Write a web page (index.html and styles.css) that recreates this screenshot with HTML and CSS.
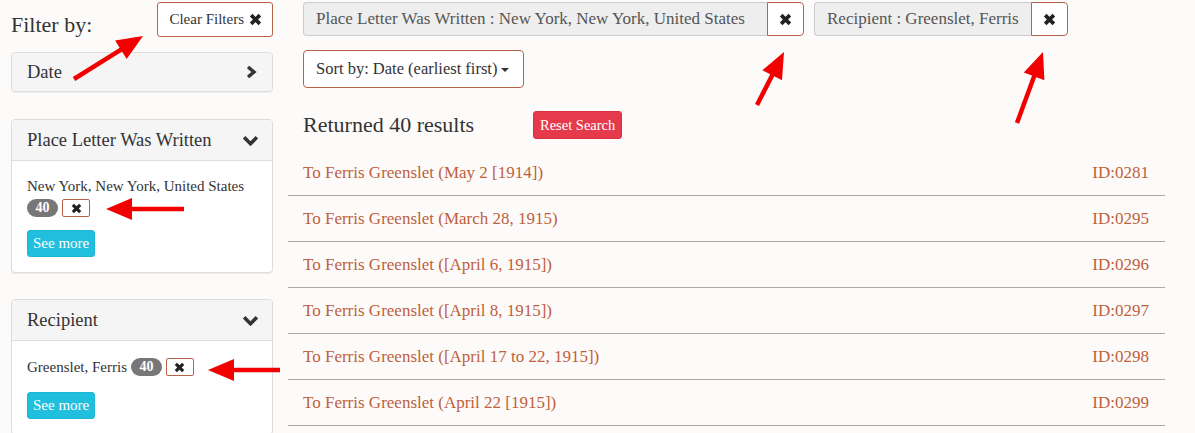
FILE: index.html
```html
<!DOCTYPE html>
<html>
<head>
<meta charset="utf-8">
<link rel="stylesheet" href="styles.css">
</head>
<body>
<div class="page">
  <aside class="sidebar">
    <div class="sidebar-top">
      <h2 class="filter-title">Filter by:</h2>
      <button class="btn-clear">Clear Filters <svg class="ico-x" viewBox="0 0 12 12"><path d="M2 2L10 10M10 2L2 10"/></svg></button>
    </div>

    <div class="card card-collapsed">
      <div class="card-head">
        <span>Date</span>
        <svg class="chev-right" viewBox="0 0 12 14"><polyline points="3,2 9,7 3,12"/></svg>
      </div>
    </div>

    <div class="card card-place">
      <div class="card-head">
        <span>Place Letter Was Written</span>
        <svg class="chev-down" viewBox="0 0 16 10"><polyline points="2,2 8,8 14,2"/></svg>
      </div>
      <div class="card-body">
        <div class="facet-line">
          <span class="facet-name">New York, New York, United States</span>
          <span class="badge">40</span>
          <button class="btn-x-small"><svg class="ico-x" viewBox="0 0 12 12"><path d="M2 2L10 10M10 2L2 10"/></svg></button>
        </div>
        <button class="btn-more">See more</button>
      </div>
    </div>

    <div class="card card-recipient">
      <div class="card-head">
        <span>Recipient</span>
        <svg class="chev-down" viewBox="0 0 16 10"><polyline points="2,2 8,8 14,2"/></svg>
      </div>
      <div class="card-body">
        <div class="facet-line">
          <span class="facet-name">Greenslet, Ferris</span>
          <span class="badge">40</span>
          <button class="btn-x-small"><svg class="ico-x" viewBox="0 0 12 12"><path d="M2 2L10 10M10 2L2 10"/></svg></button>
        </div>
        <button class="btn-more">See more</button>
      </div>
    </div>
  </aside>

  <main class="main">
    <div class="chips">
      <div class="chip">
        <span class="chip-label chip-label-place">Place Letter Was Written : New York, New York, United States</span>
        <button class="chip-x"><svg class="ico-x" viewBox="0 0 12 12"><path d="M2 2L10 10M10 2L2 10"/></svg></button>
      </div>
      <div class="chip">
        <span class="chip-label chip-label-rec">Recipient : Greenslet, Ferris</span>
        <button class="chip-x"><svg class="ico-x" viewBox="0 0 12 12"><path d="M2 2L10 10M10 2L2 10"/></svg></button>
      </div>
    </div>

    <button class="btn-sort">Sort by: Date (earliest first) <span class="caret"></span></button>

    <div class="results-head">
      <h2 class="results-title">Returned 40 results</h2>
      <button class="btn-reset">Reset Search</button>
    </div>

    <ul class="results">
      <li class="row"><a class="row-title">To Ferris Greenslet (May 2 [1914])</a><span class="row-id">ID:0281</span></li>
      <li class="row"><a class="row-title">To Ferris Greenslet (March 28, 1915)</a><span class="row-id">ID:0295</span></li>
      <li class="row"><a class="row-title">To Ferris Greenslet ([April 6, 1915])</a><span class="row-id">ID:0296</span></li>
      <li class="row"><a class="row-title">To Ferris Greenslet ([April 8, 1915])</a><span class="row-id">ID:0297</span></li>
      <li class="row"><a class="row-title">To Ferris Greenslet ([April 17 to 22, 1915])</a><span class="row-id">ID:0298</span></li>
      <li class="row"><a class="row-title">To Ferris Greenslet (April 22 [1915])</a><span class="row-id">ID:0299</span></li>
    </ul>
  </main>
</div>

<svg class="arrows" viewBox="0 0 1195 433" width="1195" height="433">
  <g class="arrow">
    <line x1="74" y1="79" x2="122.6" y2="48.7"/>
    <polygon points="143,36 126.7,59.1 115.1,40.5"/>
  </g>
  <g class="arrow">
    <line x1="184" y1="209" x2="130" y2="209"/>
    <polygon points="106,209 132,198 132,220"/>
  </g>
  <g class="arrow">
    <line x1="280" y1="370" x2="232" y2="370"/>
    <polygon points="208,370 234,359 234,381"/>
  </g>
  <g class="arrow">
    <line x1="757" y1="105" x2="773.1" y2="73.4"/>
    <polygon points="784,52 782,80.2 762.4,70.2"/>
  </g>
  <g class="arrow">
    <line x1="1017" y1="123" x2="1034.8" y2="74.5"/>
    <polygon points="1043,52 1044.4,80.2 1023.8,72.6"/>
  </g>
</svg>
</body>
</html>
```

FILE: styles.css
```css
* { box-sizing: border-box; }

body {
  margin: 0;
  background: #fdfbfa;
  font-family: "Liberation Serif", "Times New Roman", serif;
  color: #333;
  overflow: hidden;
}

button {
  font-family: inherit;
  cursor: pointer;
}

.page {
  display: flex;
  padding-top: 2px;
}

/* ---------- sidebar ---------- */
.sidebar {
  width: 262px;
  margin-left: 11px;
  flex: none;
}

.sidebar-top {
  display: flex;
  justify-content: space-between;
  align-items: flex-start;
  height: 35px;
}

.filter-title {
  margin: 10px 0 0;
  font-size: 22px;
  line-height: 25px;
  font-weight: normal;
  color: #333;
}

.btn-clear {
  height: 35px;
  padding: 0 10px 0 11px;
  background: #fff;
  border: 1px solid #b9634a;
  border-radius: 3px;
  font-size: 15px;
  color: #333;
  display: inline-flex;
  align-items: center;
  gap: 5px;
}

.btn-clear .ico-x { width: 13px; height: 13px; }

.ico-x {
  width: 12px;
  height: 12px;
  fill: none;
  stroke: #222;
  stroke-width: 3.4;
}

.card {
  background: #fff;
  border: 1px solid #ddd;
  border-radius: 4px;
  box-shadow: 0 1px 1px rgba(0, 0, 0, 0.06);
  overflow: hidden;
}

.card-collapsed { margin-top: 15px; }
.card-place { margin-top: 27px; }
.card-recipient { margin-top: 26px; }

.card-head {
  height: 40px;
  background: #f5f5f5;
  display: flex;
  align-items: center;
  justify-content: space-between;
  padding: 0 15px 0 15px;
  font-size: 18.5px;
  color: #333;
}

.card-collapsed .card-head { height: 38px; }

.card-place .card-head,
.card-recipient .card-head {
  height: 41px;
  border-bottom: 1px solid #ddd;
}

.chev-right {
  width: 12px;
  height: 14px;
  fill: none;
  stroke: #333;
  stroke-width: 3.4;
}

.chev-down {
  width: 17px;
  height: 11px;
  fill: none;
  stroke: #333;
  stroke-width: 3.4;
  margin-right: -2px;
}

.card-body {
  padding: 15px 15px 15px 15px;
}

.facet-line {
  display: flex;
  flex-wrap: wrap;
  align-items: center;
  column-gap: 4px;
  row-gap: 2px;
  font-size: 15px;
  line-height: 21px;
  color: #333;
}

.badge {
  display: inline-flex;
  align-items: center;
  justify-content: center;
  height: 18px;
  min-width: 31px;
  padding: 0 7px;
  border-radius: 10px;
  background: #777;
  color: #fff;
  font-size: 14px;
  font-weight: bold;
  line-height: 1;
}

.btn-x-small {
  height: 18px;
  width: 28px;
  padding: 0;
  background: #fff;
  border: 1px solid #b9634a;
  border-radius: 2px;
  display: inline-flex;
  align-items: center;
  justify-content: center;
}

.btn-x-small .ico-x { width: 11px; height: 11px; }

.btn-more {
  margin-top: 13px;
  height: 27px;
  padding: 0 5px;
  background: #20bfde;
  color: #fff;
  border: 1px solid #1db8d6;
  border-radius: 3px;
  font-size: 15px;
  display: block;
}

.card-recipient .facet-line { line-height: 22px; }
.card-recipient .btn-more { margin-top: 14px; }

/* ---------- main ---------- */
.main {
  width: 877px;
  margin-left: 15px;
  flex: none;
}

.chips {
  display: flex;
  gap: 10px;
  padding-left: 15px;
}

.chip {
  display: flex;
  height: 34px;
}

.chip-label {
  display: flex;
  align-items: center;
  background: #eee;
  border: 1px solid #ccc;
  border-right: none;
  border-radius: 4px 0 0 4px;
  padding: 0 12px;
  font-size: 17px;
  color: #555;
  white-space: nowrap;
}

.chip-label-place { width: 464px; }
.chip-label-rec { width: 217px; }

.chip-x {
  width: 37px;
  height: 34px;
  padding: 0;
  background: #fff;
  border: 1px solid #b9634a;
  border-radius: 0 4px 4px 0;
  display: flex;
  align-items: center;
  justify-content: center;
}

.chip-x .ico-x { width: 13px; height: 13px; }

.btn-sort {
  margin: 14px 0 0 15px;
  height: 38px;
  width: 221px;
  padding: 0 12px;
  background: #fff;
  border: 1px solid #b9634a;
  border-radius: 4px;
  font-size: 16.5px;
  color: #333;
  display: flex;
  align-items: center;
  gap: 4px;
  white-space: nowrap;
}

.caret {
  width: 0;
  height: 0;
  border-left: 4px solid transparent;
  border-right: 4px solid transparent;
  border-top: 4px solid #333;
  margin-top: 2px;
}

.results-head {
  display: flex;
  align-items: center;
  margin-top: 23px;
  padding-left: 15px;
  height: 28px;
}

.results-title {
  width: 230px;
  margin: 0;
  font-size: 22px;
  font-weight: normal;
  color: #333;
  white-space: nowrap;
}

.btn-reset {
  height: 28px;
  padding: 0 6px;
  background: #e53a4b;
  border: 1px solid #d93243;
  border-radius: 3px;
  color: #fff;
  font-size: 14.5px;
}

.results {
  list-style: none;
  margin: 11px 0 0;
  padding: 0;
}

.row {
  height: 46px;
  display: flex;
  align-items: center;
  justify-content: space-between;
  padding: 0 16px 0 15px;
  border-bottom: 1px solid #aaa;
  font-size: 17px;
}

.row-title,
.row-id {
  color: #bf5f3c;
  text-decoration: none;
}

/* ---------- annotation arrows ---------- */
.arrows {
  position: absolute;
  top: 0;
  left: 0;
  pointer-events: none;
}

.arrow line {
  stroke: #f20000;
  stroke-width: 4.5;
}

.arrow polygon {
  fill: #f20000;
}
```
